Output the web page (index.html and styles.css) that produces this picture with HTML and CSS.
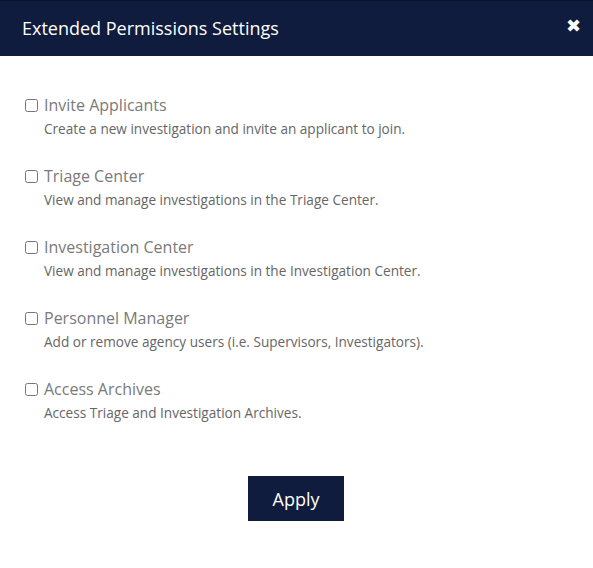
FILE: index.html
```html
<!DOCTYPE html>
<html lang="en">

<head>
    <meta charset="UTF-8">
    <meta name="viewport" content="width=device-width, initial-scale=1.0">
    <title>Extended Permissions Settings</title>

    <link rel="stylesheet" href="styles.css">
</head>

<body>
    <div id="modal">
        <div class="modal-header">
            <h2>Extended Permissions Settings</h2>
            <span class="close">&#10006;</span>
        </div>

        <div class="modal-body">
            <div class="perm">
                <label><input type="checkbox"> Invite Applicants</label>
                <p>Create a new investigation and invite an applicant to join.</p>
            </div>
            <div class="perm">
                <label><input type="checkbox"> Triage Center</label>
                <p>View and manage investigations in the Triage Center.</p>
            </div>
            <div class="perm">
                <label><input type="checkbox"> Investigation Center</label>
                <p>View and manage investigations in the Investigation Center.</p>
            </div>
            <div class="perm">
                <label><input type="checkbox"> Personnel Manager</label>
                <p>Add or remove agency users (i.e. Supervisors, Investigators).</p>
            </div>
            <div class="perm">
                <label><input type="checkbox"> Access Archives</label>
                <p>Access Triage and Investigation Archives.</p>
            </div>

            <div class="actions">
                <button id="button">Apply</button>
            </div>
        </div>
    </div>
</body>

</html>
```

FILE: styles.css
```css
body {
  margin: 0;
  background: #ffffff;
  font-family: 'Open Sans', sans-serif;
}
#modal {
  width: 593px;
}
/* Dark header bar */
.modal-header {
  height: 56px;
  background: #101c3d;
  border-top: 1px solid #0a1128;
  box-sizing: border-box;
  display: flex;
  align-items: center;
  justify-content: space-between;
  padding: 0 12px 2px 22px;
}
.modal-header h2 {
  margin: 0;
  color: #ffffff;
  font-size: 18px;
  font-weight: 400;
}
.close {
  color: #ffffff;
  font-size: 18px;
  font-family: 'DejaVu Sans', sans-serif;
  cursor: pointer;
  margin-top: -5px;
}
.modal-body {
  padding: 38px 24px 0 24px;
}
.perm {
  height: 71px;
}
.perm label {
  display: flex;
  align-items: center;
  color: #7a7a7a;
  font-size: 16px;
  line-height: 22px;
}
.perm input {
  width: 13px;
  height: 13px;
  margin: 0 6px 0 1px;
}
.perm p {
  margin: 4px 0 0 20px;
  color: #666666;
  font-size: 13.6px;
  line-height: 18px;
}
.actions {
  display: flex;
  justify-content: center;
  padding: 27px 1px 0 0;
}
#button {
  width: 96px;
  height: 45px;
  background: #101c3d;
  color: #ffffff;
  border: none;
  font-family: 'Open Sans', sans-serif;
  font-size: 18px;
  cursor: pointer;
}
```
